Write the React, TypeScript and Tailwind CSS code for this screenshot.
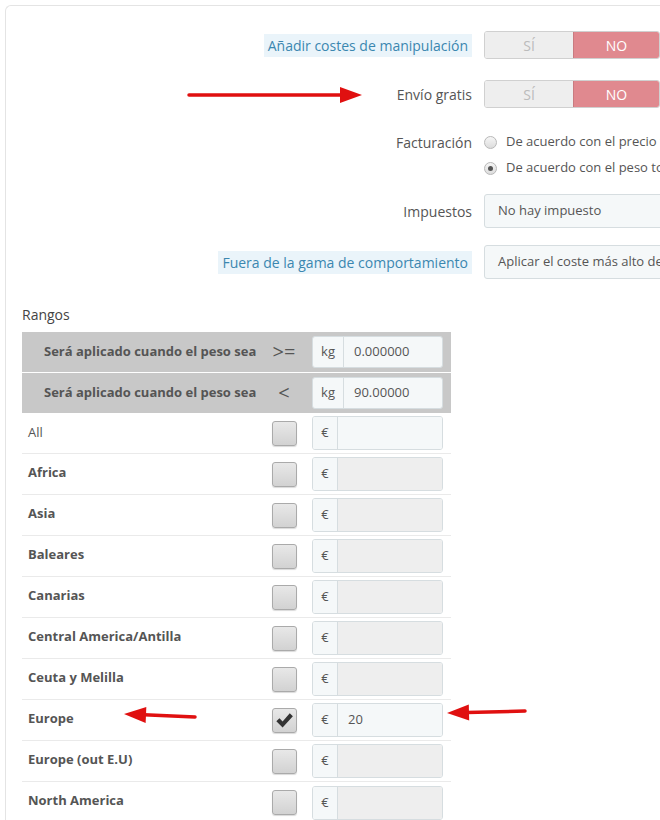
import React from "react";

const zones = [
  { name: "All", bold: false, checked: false, value: "", enabled: true },
  { name: "Africa", bold: true, checked: false, value: "", enabled: false },
  { name: "Asia", bold: true, checked: false, value: "", enabled: false },
  { name: "Baleares", bold: true, checked: false, value: "", enabled: false },
  { name: "Canarias", bold: true, checked: false, value: "", enabled: false },
  { name: "Central America/Antilla", bold: true, checked: false, value: "", enabled: false },
  { name: "Ceuta y Melilla", bold: true, checked: false, value: "", enabled: false },
  { name: "Europe", bold: true, checked: true, value: "20", enabled: true },
  { name: "Europe (out E.U)", bold: true, checked: false, value: "", enabled: false },
  { name: "North America", bold: true, checked: false, value: "", enabled: false },
];

function Toggle() {
  return (
    <div className="flex h-[28px] w-[176px] shrink-0 overflow-hidden rounded-[3px] border border-[#d0d0d0] text-[14px]">
      <div className="flex w-[88px] items-center justify-center bg-[#eeeeee] text-[#bbbbbb]">SÍ</div>
      <div className="flex flex-1 items-center justify-center border-l border-[#c97b80] bg-[#e0898f] text-white">NO</div>
    </div>
  );
}

function Radio({ checked }: { checked?: boolean }) {
  return (
    <span className="flex h-[13px] w-[13px] items-center justify-center rounded-full border border-[#b8b8b8] bg-gradient-to-b from-[#f6f6f6] to-[#dcdcdc]">
      {checked && <span className="h-[5px] w-[5px] rounded-full bg-[#555]" />}
    </span>
  );
}

function Checkbox({ checked }: { checked?: boolean }) {
  return (
    <div className="flex h-[25px] w-[25px] items-center justify-center rounded-[3px] border border-[#aaaaaa] bg-gradient-to-b from-[#e8e8e8] to-[#d2d2d2] shadow-[0_1px_1px_rgba(0,0,0,0.15)]">
      {checked && (
        <svg width="19" height="17" viewBox="0 0 17 15">
          <path d="M1.2 8.2 L4.0 5.4 L6.8 8.4 L13.2 1.0 L16.0 3.6 L6.8 13.8 Z" fill="#333" />
        </svg>
      )}
    </div>
  );
}

function Arrow({ x1, y1, x2, y2 }: { x1: number; y1: number; x2: number; y2: number }) {
  const dx = x2 - x1;
  const dy = y2 - y1;
  const len = Math.sqrt(dx * dx + dy * dy);
  const ux = dx / len;
  const uy = dy / len;
  const hl = 22;
  const hw = 8;
  const bx = x2 - ux * hl;
  const by = y2 - uy * hl;
  const p1 = `${bx - uy * hw},${by + ux * hw}`;
  const p2 = `${bx + uy * hw},${by - ux * hw}`;
  return (
    <g>
      <line x1={x1} y1={y1} x2={bx + ux * 2} y2={by + uy * 2} stroke="#e01010" strokeWidth="3.5" strokeLinecap="round" />
      <polygon points={`${x2},${y2} ${p1} ${p2}`} fill="#e01010" />
    </g>
  );
}

export default function App() {
  return (
    <div
      className="relative h-[820px] w-[660px] overflow-hidden bg-white"
      style={{ fontFamily: '"Open Sans", "Liberation Sans", sans-serif' }}
    >
      <div className="absolute left-[5px] top-[5px] h-[900px] w-[800px] rounded-tl-[6px] border-l border-t border-[#e4e4e4]" />
      <div className="relative w-[1000px] pl-[6px] pt-[31px]">
        {/* Row 1 */}
        <div className="flex items-center">
          <div className="flex w-[466px] shrink-0 justify-end">
            <span className="bg-[#eaf4fa] px-[4px] py-[1px] text-[14px] text-[#3b87b0]">Añadir costes de manipulación</span>
          </div>
          <div className="ml-[12px] shrink-0">
            <Toggle />
          </div>
        </div>
        {/* Row 2 */}
        <div className="mt-[21px] flex items-center">
          <div className="flex w-[466px] shrink-0 justify-end">
            <span className="text-[14px] text-[#555]">Envío gratis</span>
          </div>
          <div className="ml-[12px] shrink-0">
            <Toggle />
          </div>
        </div>
        {/* Row 3 */}
        <div className="mt-[21px] flex">
          <div className="flex w-[466px] shrink-0 justify-end pt-[3px]">
            <span className="text-[14px] text-[#555]">Facturación</span>
          </div>
          <div className="ml-[12px] flex shrink-0 flex-col">
            <label className="flex h-[26px] items-center whitespace-nowrap text-[13px] text-[#555]">
              <span className="mr-[9px]"><Radio /></span>
              De acuerdo con el precio total del pedido
            </label>
            <label className="flex h-[26px] items-center whitespace-nowrap text-[13px] text-[#555]">
              <span className="mr-[9px]"><Radio checked /></span>
              De acuerdo con el peso total del pedido
            </label>
          </div>
        </div>
        {/* Row 4 */}
        <div className="mt-[13px] flex items-center">
          <div className="flex w-[466px] shrink-0 justify-end">
            <span className="text-[14px] text-[#555]">Impuestos</span>
          </div>
          <div className="ml-[12px] flex h-[34px] w-[300px] shrink-0 items-center whitespace-nowrap rounded-[3px] border border-[#d6dde0] bg-[#f5f8f9] pl-[13px] text-[13px] text-[#555]">
            No hay impuesto
          </div>
        </div>
        {/* Row 5 */}
        <div className="mt-[17px] flex items-center">
          <div className="flex w-[466px] shrink-0 justify-end">
            <span className="bg-[#eaf4fa] px-[4px] py-[1px] text-[14px] text-[#3b87b0]">Fuera de la gama de comportamiento</span>
          </div>
          <div className="ml-[12px] flex h-[34px] w-[300px] shrink-0 items-center whitespace-nowrap rounded-[3px] border border-[#d6dde0] bg-[#f5f8f9] pl-[13px] text-[13px] text-[#555]">
            Aplicar el coste más alto de los rangos definidos
          </div>
        </div>

        {/* Rangos */}
        <div className="ml-[16px] mt-[25px] w-[429px]">
          <div className="h-[22px] text-[14px] leading-[22px] text-[#444]">Rangos</div>
          <div className="mt-[6px]">
            {[">=", "<"].map((sym, i) => (
              <div
                key={sym}
                className={`flex h-[40px] items-center bg-[#c8c8c8] ${i === 1 ? "mt-[1px]" : ""}`}
              >
                <div className="w-[240px] shrink-0 pl-[22px] text-[13px] font-bold text-[#555]">Será aplicado cuando el peso sea</div>
                <div className="flex w-[44px] shrink-0 justify-center text-[20px] leading-none text-[#555]">{sym}</div>
                <div className="ml-[6px] flex h-[32px] w-[131px] shrink-0 overflow-hidden rounded-[3px] border border-[#d6dde0] bg-[#f5f8f9] text-[13px] text-[#555]">
                  <div className="flex w-[31px] items-center justify-center border-r border-[#d6dde0]">kg</div>
                  <div className="flex flex-1 items-center pl-[10px]">{i === 0 ? "0.000000" : "90.00000"}</div>
                </div>
              </div>
            ))}
            {zones.map((z, i) => (
              <div
                key={z.name}
                className={`flex h-[41px] items-center ${i < zones.length - 1 ? "border-b border-[#eaeaea]" : ""}`}
              >
                <div
                  className={`w-[240px] shrink-0 pl-[6px] text-[13px] text-[#555] ${z.bold ? "pb-[3px] font-bold" : "font-normal"}`}
                >
                  {z.name}
                </div>
                <div className="flex w-[44px] shrink-0 justify-center">
                  <Checkbox checked={z.checked} />
                </div>
                <div className="ml-[6px] flex h-[34px] w-[131px] shrink-0 overflow-hidden rounded-[3px] border border-[#d6dde0] text-[13px] text-[#555]">
                  <div className="flex w-[25px] items-center justify-center border-r border-[#d6dde0] bg-[#f5f8f9]">€</div>
                  <div className={`flex flex-1 items-center pl-[10px] ${z.enabled ? "bg-[#f5f8f9]" : "bg-[#eeeeee]"}`}>{z.value}</div>
                </div>
              </div>
            ))}
          </div>
        </div>
      </div>

      <svg className="pointer-events-none absolute left-0 top-0" width="660" height="820">
        <Arrow x1={189} y1={95} x2={362} y2={95} />
        <Arrow x1={195} y1={717} x2={124} y2={714} />
        <Arrow x1={525} y1={711} x2={447} y2={713} />
      </svg>
    </div>
  );
}
